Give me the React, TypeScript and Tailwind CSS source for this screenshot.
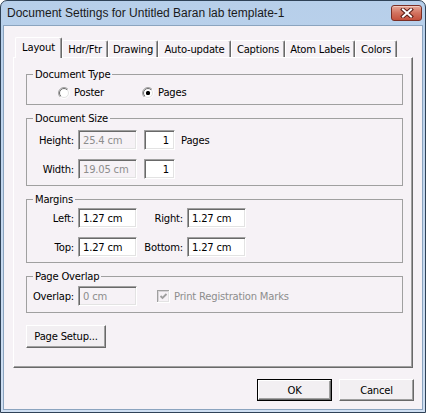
import React from "react";

const tabs: { label: string; w: string; sel?: boolean }[] = [
  { label: "Layout", w: "w-[47px]", sel: true },
  { label: "Hdr/Ftr", w: "w-[46px]" },
  { label: "Drawing", w: "w-[50px]" },
  { label: "Auto-update", w: "w-[73px]" },
  { label: "Captions", w: "w-[54px]" },
  { label: "Atom Labels", w: "w-[70px]" },
  { label: "Colors", w: "w-[42px]" },
];

function Edit({
  value,
  w,
  disabled,
  right,
}: {
  value: string;
  w: string;
  disabled?: boolean;
  right?: boolean;
}) {
  return (
    <div
      className={`${w} h-[20px] flex items-center border border-t-[#a0a0a0] border-l-[#a0a0a0] border-b-white border-r-white shadow-[inset_1px_1px_0_#696969,inset_-1px_-1px_0_#e3e3e3] ${
        disabled ? "bg-[#f6f2f6] text-[#8d8d8d]" : "bg-white text-black"
      } ${right ? "justify-end pr-[5px]" : "pl-[4px]"}`}
    >
      {value}
    </div>
  );
}

function Radio({ checked }: { checked?: boolean }) {
  return (
    <svg width="12" height="12" viewBox="0 0 12 12" className="shrink-0">
      <defs>
        <linearGradient id="rOut" x1="0" y1="0" x2="1" y2="1">
          <stop offset="0.5" stopColor="#a0a0a0" />
          <stop offset="0.5" stopColor="#ffffff" />
        </linearGradient>
        <linearGradient id="rIn" x1="0" y1="0" x2="1" y2="1">
          <stop offset="0.5" stopColor="#696969" />
          <stop offset="0.5" stopColor="#e3e3e3" />
        </linearGradient>
      </defs>
      <circle cx="6" cy="6" r="5.5" fill="none" stroke="url(#rOut)" strokeWidth="1" />
      <circle cx="6" cy="6" r="4.5" fill="#ffffff" stroke="url(#rIn)" strokeWidth="1" />
      {checked && <rect x="4" y="4" width="4" height="4" rx="1.5" fill="#000000" />}
    </svg>
  );
}

function Btn({
  children,
  w,
  h,
  def,
}: {
  children: React.ReactNode;
  w: string;
  h: string;
  def?: boolean;
}) {
  if (def) {
    return (
      <div className={`${w} ${h} border border-black flex`}>
        <div className="flex-1 flex items-center justify-center bg-[#f2eff2] border border-t-white border-l-white border-r-[#696969] border-b-[#696969] shadow-[inset_-1px_-1px_0_#a0a0a0]">
          {children}
        </div>
      </div>
    );
  }
  return (
    <div
      className={`${w} ${h} flex items-center justify-center bg-[#f2eff2] border border-t-white border-l-white border-r-[#696969] border-b-[#696969] shadow-[inset_-1px_-1px_0_#a0a0a0]`}
    >
      {children}
    </div>
  );
}

function Group({
  title,
  children,
  className,
}: {
  title: string;
  children: React.ReactNode;
  className?: string;
}) {
  return (
    <fieldset className={`border border-[#a0a0a0] ${className ?? ""}`}>
      <legend className="ml-[6px] px-[2px] leading-[13px] text-black">{title}</legend>
      {children}
    </fieldset>
  );
}

export default function App() {
  return (
    <div className="w-[426px] h-[413px] bg-white">
      <div className="w-[426px] h-[413px] flex flex-col rounded-t-[7px] border border-[#2f4257] bg-gradient-to-b from-[#b7cfea] to-[#cfdff2] font-['DejaVu_Sans',Verdana,sans-serif] text-[10px] tracking-[-0.2px] leading-[13px] text-black overflow-hidden">
        {/* title bar */}
        <div className="h-[24px] shrink-0 flex items-center pl-[6px] pr-[3px]">
          <div className="text-[12px] tracking-normal text-[#1a1a1a] leading-[15px] pt-[1px] font-['Liberation_Sans',Arial,sans-serif]">
            Document Settings for Untitled Baran lab template-1
          </div>
          <div className="ml-auto w-[31px] h-[16px] rounded-[3px] border border-[#7a2e25] bg-gradient-to-b from-[#e6a898] via-[#d2725f] to-[#c4503c] shadow-[inset_0_1px_0_#f2c9bd] flex items-center justify-center">
            <svg width="14" height="10" viewBox="0 0 14 10">
              <path d="M3 1.5 L11 8.5 M11 1.5 L3 8.5" stroke="#5a1d16" strokeWidth="4" strokeLinecap="square" />
              <path d="M3 1.5 L11 8.5 M11 1.5 L3 8.5" stroke="#ffffff" strokeWidth="2" strokeLinecap="square" />
            </svg>
          </div>
        </div>

        {/* client area */}
        <div className="flex-1 mx-[2px] mb-[2px] border border-[#8ba4bf] bg-[#f6f2f6] flex flex-col pl-[9px] pr-[8px] pt-[11px]">
          {/* tabs */}
          <div className="flex items-end h-[21px] pl-[2px] -mb-[1px] relative z-10">
            {tabs.map((t) =>
              t.sel ? (
                <div
                  key={t.label}
                  className={`${t.w} h-[21px] flex justify-center pt-[3px] bg-[#f6f2f6] border-t border-l border-r border-t-white border-l-white border-r-[#696969] rounded-t-[2px] shadow-[inset_-1px_0_0_#a0a0a0]`}
                >
                  {t.label}
                </div>
              ) : (
                <div
                  key={t.label}
                  className={`${t.w} h-[17px] mb-[1px] flex justify-center pt-[2px] bg-[#f6f2f6] border-t border-l border-r border-t-white border-l-white border-r-[#696969] rounded-t-[2px] shadow-[inset_-1px_0_0_#a0a0a0]`}
                >
                  {t.label}
                </div>
              )
            )}
          </div>

          {/* panel */}
          <div className="w-[400px] h-[311px] flex flex-col pt-[10px] pl-[12px] pr-[9px] border border-t-white border-l-white border-r-[#696969] border-b-[#696969] shadow-[inset_-1px_-1px_0_#a0a0a0]">
            <Group title="Document Type" className="pb-[5px]">
              <div className="flex items-center h-[13px] mt-[5px] pl-[31px]">
                <div className="w-[84px] flex items-center gap-[4px]">
                  <Radio />
                  <span>Poster</span>
                </div>
                <div className="flex items-center gap-[4px]">
                  <Radio checked />
                  <span>Pages</span>
                </div>
              </div>
            </Group>

            <Group title="Document Size" className="mt-[7px] pb-[6px]">
              <div className="flex flex-col gap-[9px] mt-[5px]">
                <div className="flex items-center">
                  <div className="w-[47px] text-right">Height:</div>
                  <div className="ml-[4px]">
                    <Edit value="25.4 cm" w="w-[59px]" disabled />
                  </div>
                  <div className="ml-[7px]">
                    <Edit value="1" w="w-[31px]" right />
                  </div>
                  <div className="ml-[6px]">Pages</div>
                </div>
                <div className="flex items-center">
                  <div className="w-[47px] text-right">Width:</div>
                  <div className="ml-[4px]">
                    <Edit value="19.05 cm" w="w-[59px]" disabled />
                  </div>
                  <div className="ml-[7px]">
                    <Edit value="1" w="w-[31px]" right />
                  </div>
                </div>
              </div>
            </Group>

            <Group title="Margins" className="mt-[7px] pb-[5px]">
              <div className="flex flex-col gap-[9px] mt-[2px]">
                <div className="flex items-center">
                  <div className="w-[47px] text-right">Left:</div>
                  <div className="ml-[4px]">
                    <Edit value="1.27 cm" w="w-[59px]" />
                  </div>
                  <div className="w-[46px] text-right">Right:</div>
                  <div className="ml-[4px]">
                    <Edit value="1.27 cm" w="w-[59px]" />
                  </div>
                </div>
                <div className="flex items-center">
                  <div className="w-[47px] text-right">Top:</div>
                  <div className="ml-[4px]">
                    <Edit value="1.27 cm" w="w-[59px]" />
                  </div>
                  <div className="w-[46px] text-right">Bottom:</div>
                  <div className="ml-[4px]">
                    <Edit value="1.27 cm" w="w-[59px]" />
                  </div>
                </div>
              </div>
            </Group>

            <Group title="Page Overlap" className="mt-[7px] pb-[6px]">
              <div className="flex items-center mt-[3px]">
                <div className="w-[47px] text-right">Overlap:</div>
                <div className="ml-[4px]">
                  <Edit value="0 cm" w="w-[59px]" disabled />
                </div>
                <svg width="13" height="13" viewBox="0 0 13 13" className="ml-[20px] shrink-0">
                  <rect x="0" y="0" width="13" height="13" fill="#ffffff" />
                  <rect x="0" y="0" width="12" height="12" fill="#a0a0a0" />
                  <rect x="1" y="1" width="11" height="11" fill="#e3e3e3" />
                  <rect x="1" y="1" width="10" height="10" fill="#d8d5d8" />
                  <rect x="2" y="2" width="9" height="9" fill="#f6f2f6" />
                  <path d="M3.5 6 L5.5 8 L9.5 4" fill="none" stroke="#a0a0a0" strokeWidth="1.8" />
                </svg>
                <span className="ml-[4px] text-[#8d8d8d]">Print Registration Marks</span>
              </div>
            </Group>

            <div className="mt-[12px]">
              <Btn w="w-[80px]" h="h-[23px]">
                Page Setup...
              </Btn>
            </div>
          </div>

          {/* bottom buttons */}
          <div className="flex justify-end gap-[7px] mt-[11px]">
            <Btn w="w-[75px]" h="h-[22px]" def>
              OK
            </Btn>
            <Btn w="w-[75px]" h="h-[22px]">
              Cancel
            </Btn>
          </div>
        </div>
      </div>
    </div>
  );
}
